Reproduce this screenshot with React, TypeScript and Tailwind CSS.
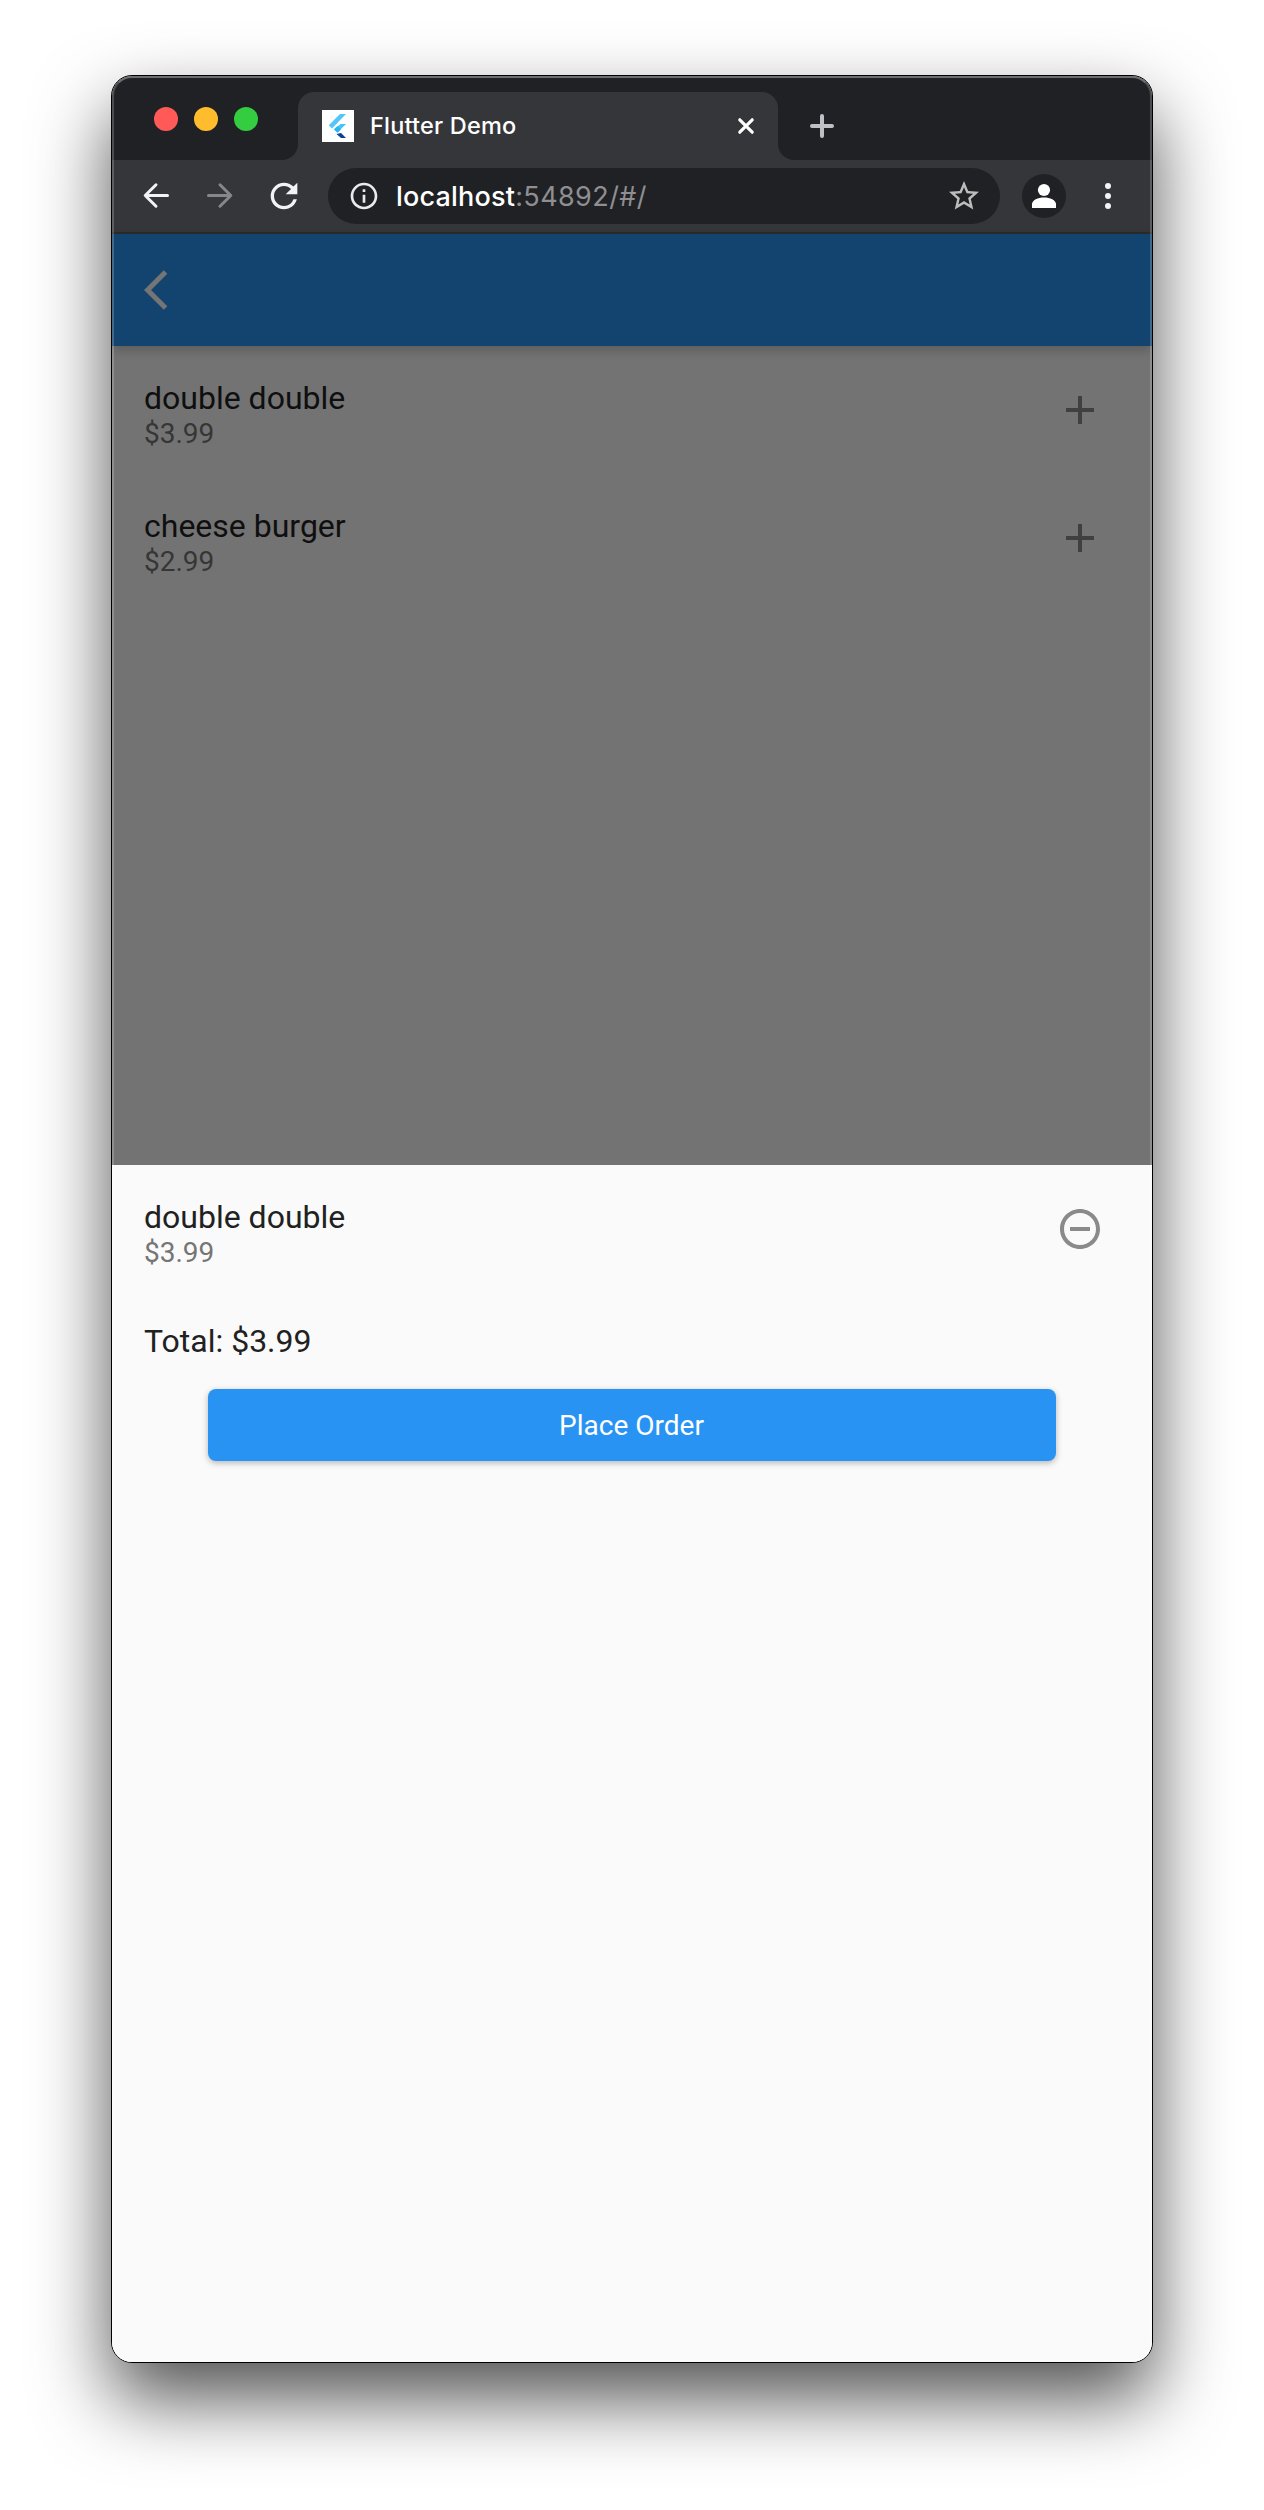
import { MdAdd, MdOutlineInfo, MdRefresh, MdRemoveCircleOutline, MdStarBorder } from "react-icons/md";

function TabStrip() {
  return (
    <div className="flex h-[84px] bg-[#202124] pl-[42px]">
      <div className="flex gap-4 pt-[31px]">
        <span className="size-6 rounded-full bg-[#ff5a57]" />
        <span className="size-6 rounded-full bg-[#ffbd2e]" />
        <span className="size-6 rounded-full bg-[#34cc40]" />
      </div>
      <div className="ml-6 flex h-full items-end">
        <svg width="16" height="16" viewBox="0 0 16 16" className="fill-[#35363a]">
          <path d="M16 0v16H0A16 16 0 0 0 16 0z" />
        </svg>
        <div className="flex h-[68px] w-[480px] items-center rounded-t-2xl bg-[#35363a] pl-6 pr-[22px]">
          <div className="size-8 bg-white">
            <FlutterLogo />
          </div>
          <span className="ml-4 flex-1 whitespace-nowrap text-[23.5px] font-medium leading-8 tracking-[0.2px] text-white">Flutter Demo</span>
          <svg width="20" height="20" viewBox="0 0 20 20" className="fill-none stroke-white stroke-[3.2]" strokeLinecap="round">
            <path d="M3.8 3.8l12.4 12.4M16.2 3.8L3.8 16.2" />
          </svg>
        </div>
        <svg width="16" height="16" viewBox="0 0 16 16" className="fill-[#35363a]">
          <path d="M0 0v16h16A16 16 0 0 1 0 0z" />
        </svg>
        <svg width="24" height="24" viewBox="0 0 24 24" className="mb-[22px] ml-4 fill-none stroke-[#bdc1c6] stroke-[4]" strokeLinecap="round">
          <path d="M2 12h20M12 2v20" />
        </svg>
      </div>
    </div>
  );
}

function FlutterLogo() {
  return (
    <svg width="32" height="32" viewBox="0 0 32 32">
      <path d="M18 4H24L10 18.4 6.8 15.2z" fill="#54c5f8" />
      <path d="M18.5 14H24L15.4 22.4 12 19.6z" fill="#40c4ff" />
      <path d="M12 19.2l3.4-3.3 3.6 3.6-3.6 3.3z" fill="#29b6f6" />
      <path d="M14.5 24L19 23l5 5h-5z" fill="#0d3f94" />
    </svg>
  );
}

function Toolbar() {
  return (
    <div className="flex h-[74px] items-center border-b-2 border-[#2a2c2a] bg-[#35363a] pl-[30px]">
      <svg width="28" height="28" viewBox="0 0 28 28" className="fill-none stroke-[#f1f3f4] stroke-[3]" strokeLinecap="round" strokeLinejoin="round">
        <path d="M25.5 13.5h-22M14 2.8L3.2 13.5 14 24.2" />
      </svg>
      <svg width="28" height="28" viewBox="0 0 28 28" className="ml-9 fill-none stroke-[#86878a] stroke-[3]" strokeLinecap="round" strokeLinejoin="round">
        <path d="M2.5 13.5h22M14 2.8l10.8 10.7L14 24.2" />
      </svg>
      <MdRefresh size={40} className="ml-[30px] text-[#f1f3f4]" />
      <div className="ml-6 flex h-14 w-[672px] items-center rounded-full bg-[#202124] pl-5">
        <MdOutlineInfo size={32} className="text-[#e8eaed]" />
        <span className="ml-4 flex-1 whitespace-nowrap pt-px text-[27px] leading-8 text-[#8f8f91]">
          <span className="font-medium tracking-[0.2px] text-white">localhost</span>
          <span className="tracking-[0.4px]">:54892/#/</span>
        </span>
        <MdStarBorder size={36} className="mr-[18px] text-[#bdbdbd]" />
      </div>
      <svg width="44" height="44" viewBox="0 0 44 44" className="ml-[22px] fill-white">
        <circle cx="22" cy="22" r="22" className="fill-[#202124]" />
        <circle cx="22" cy="16" r="6.1" />
        <path d="M10 34v-4c0-4 6-6.6 12-6.6S34 26 34 30v4z" />
      </svg>
      <svg width="6" height="26" viewBox="0 0 6 26" className="ml-[39px] fill-[#f1f3f4]">
        <circle cx="3" cy="3" r="3" />
        <circle cx="3" cy="13" r="3" />
        <circle cx="3" cy="23" r="3" />
      </svg>
    </div>
  );
}

const menu = [
  { name: "double double", price: "$3.99" },
  { name: "cheese burger", price: "$2.99" },
];

function MenuRow({ name, price, dimmed }: { name: string; price: string; dimmed?: boolean }) {
  return (
    <div className="flex h-32 items-center justify-between pl-8 pr-12">
      <div className="flex flex-col pt-[11px]">
        <span className={"text-[32px] leading-9 " + (dimmed ? "text-[#0f0f0f]" : "text-[#212121]")}>{name}</span>
        <span className={"text-[28px] leading-[35px] " + (dimmed ? "text-[#363636]" : "text-[#757575]")}>{price}</span>
      </div>
      {dimmed ? <MdAdd size={48} className="text-[#404040]" /> : <MdRemoveCircleOutline size={48} className="text-[#8a8a8a]" />}
    </div>
  );
}

export default function App() {
  return (
    <div className="h-[2510px] w-[1264px] overflow-hidden bg-white px-[111px] pt-[75px] font-['Inter',sans-serif]">
      <div className="relative flex h-[2288px] w-[1042px] flex-col overflow-hidden rounded-[21px] border border-black bg-[#fafafa] shadow-[0_36px_76px_rgba(0,0,0,0.68)]">
        <TabStrip />
        <Toolbar />
        <div className="flex h-[931px] flex-col bg-[#737373] font-['Roboto',sans-serif]">
          <div className="flex h-28 items-center bg-[#13446f] pl-8 shadow-[0_4px_10px_rgba(0,0,0,0.2)]">
            <svg width="24" height="48" viewBox="0 0 12 24" className="fill-[#757575]">
              <path d="M11.67 3.87L9.9 2.1 0 12l9.9 9.9 1.77-1.77L3.54 12z" />
            </svg>
          </div>
          {menu.map((item) => (
            <MenuRow key={item.name} name={item.name} price={item.price} dimmed />
          ))}
        </div>
        <div className="flex flex-1 flex-col bg-[#fafafa] font-['Roboto',sans-serif]">
          <MenuRow name="double double" price="$3.99" />
          <span className="mt-7 pl-8 text-[32px] leading-10 text-[#212121]">Total: $3.99</span>
          <button className="mx-24 mt-7 h-[72px] rounded-lg bg-[#2993f3] pr-px pt-0.5 text-[28px] text-white shadow-[0_2px_6px_rgba(0,0,0,0.28)]">
            Place Order
          </button>
        </div>
        <div className="pointer-events-none absolute inset-0 rounded-[20px] border-2 border-white/20 border-t-white/35" />
      </div>
    </div>
  );
}
